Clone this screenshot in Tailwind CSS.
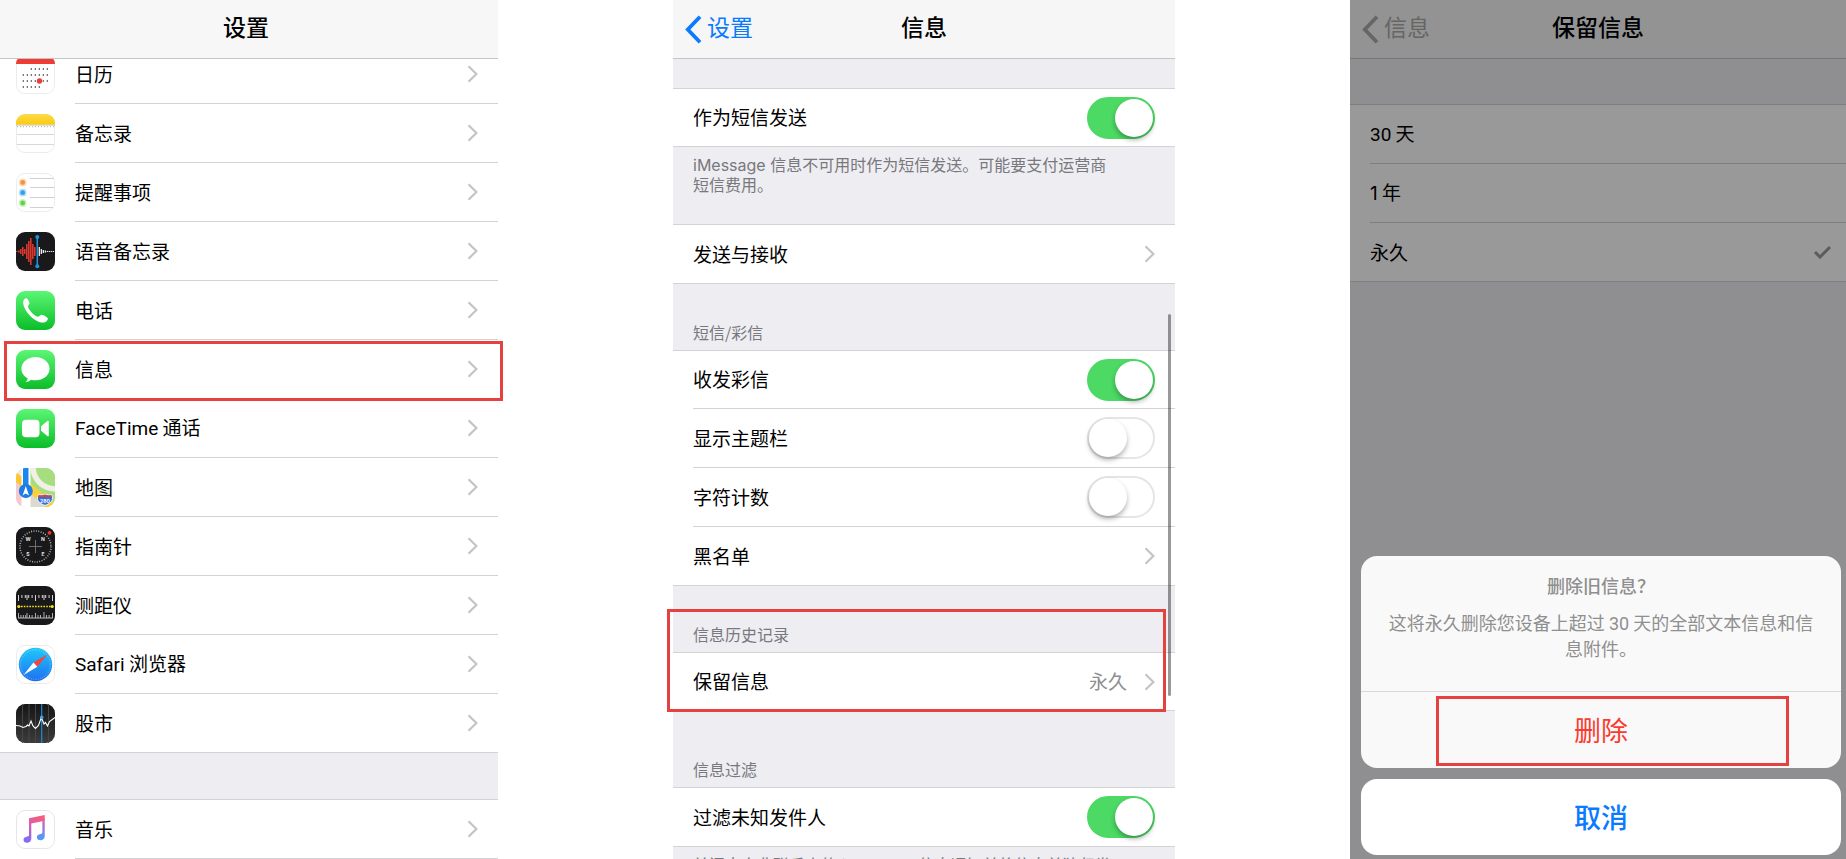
<!DOCTYPE html>
<html lang="zh-CN">
<head>
    <meta charset="UTF-8">
    <meta name="viewport" content="width=device-width, initial-scale=1.0">
    <title>设置 - 信息 - 保留信息</title>
    <script src="https://cdn.jsdelivr.net/npm/@tailwindcss/browser@4"></script>
</head>
<body class="bg-white font-['Noto_Sans_CJK_SC',sans-serif] text-[19px] text-black">

    <!-- Shared shapes -->
    <svg class="absolute size-0">
        <symbol id="chevron" viewBox="0 0 11 18"><path d="M1.5 1.2 9.4 9l-7.900 7.800" fill="none" stroke="#c4c4c8" stroke-width="2.200"/></symbol>
        <symbol id="back" viewBox="0 0 17 29"><path d="M15 1.800 2.800 14.500 15 27.200" fill="none" stroke="currentColor" stroke-width="3.800"/></symbol>
        <linearGradient id="green" x1="0" y1="0" x2="0" y2="1"><stop offset="0" stop-color="#5bf675"/><stop offset="1" stop-color="#0bbd29"/></linearGradient>
        <linearGradient id="yellow" x1="0" y1="0" x2="0" y2="1"><stop offset="0" stop-color="#fadb4b"/><stop offset="1" stop-color="#fccb0c"/></linearGradient>
        <linearGradient id="blue" x1="0" y1="0" x2="0" y2="1"><stop offset="0" stop-color="#1fc8fb"/><stop offset="1" stop-color="#1f6ff0"/></linearGradient>
        <linearGradient id="stock" x1="0" y1="0" x2="0" y2="1"><stop offset="0" stop-color="#151515"/><stop offset="1" stop-color="#3c3c3e"/></linearGradient>
        <linearGradient id="note" gradientUnits="userSpaceOnUse" x1="24" y1="5" x2="14" y2="33"><stop offset="0" stop-color="#fb5c74"/><stop offset="0.4" stop-color="#d860b0"/><stop offset="1" stop-color="#7d6bff"/></linearGradient>
        <linearGradient id="noteRight" gradientUnits="userSpaceOnUse" x1="26" y1="8" x2="26" y2="30"><stop offset="0" stop-color="#f65f86"/><stop offset="0.500" stop-color="#9a70e0"/><stop offset="1" stop-color="#3fa4ff"/></linearGradient>
    </svg>

    <main class="flex h-screen gap-[175px] overflow-hidden">

        <!-- Settings -->
        <section class="flex-[498] min-w-0">
            <header class="relative z-10 flex h-[59px] items-center justify-center border-b border-[#c4c4c6] bg-[#f7f7f7] pr-1.5 font-['Roboto','Noto_Sans_CJK_SC',sans-serif]">
                <h1 class="text-[23px] font-medium">设置</h1>
            </header>

            <nav class="-mt-[14px]">
                <a href="#calendar" class="flex h-[59px] items-center pl-4">
                    <svg class="size-[39px] shrink-0" viewBox="0 0 39 39">
                        <rect x="0.500" y="0.500" width="38" height="38" rx="8.500" fill="#fff" stroke="#ececec"/>
                        <path d="M0 9V9a9 9 0 0 1 9-9h21a9 9 0 0 1 9 9z" fill="#ee3b33"/>
                        <g stroke="#222" stroke-width="1.500" stroke-linecap="round" stroke-dasharray="0 4">
                            <path d="M15.300 14h16.100M7.300 20h24.100M7.300 26h24.100M7.300 32h16.100"/>
                        </g>
                        <circle cx="23.500" cy="26" r="2.700" fill="#ee3b33"/>
                    </svg>
                    <span class="ml-5 flex h-full flex-1 items-center justify-between border-b border-[#d3d3d6] pr-5">日历<svg class="h-[18px] w-[11px]"><use href="#chevron"/></svg></span>
                </a>
                <a href="#notes" class="flex h-[59px] items-center pl-4">
                    <svg class="size-[39px] shrink-0" viewBox="0 0 39 39">
                        <rect x="0.500" y="0.500" width="38" height="38" rx="8.500" fill="#fff" stroke="#ececec"/>
                        <path d="M0 10.500V9a9 9 0 0 1 9-9h21a9 9 0 0 1 9 9v1.500z" fill="url(#yellow)"/>
                        <path d="M0 11h39" stroke="#c5b26a" stroke-width="0.800"/>
                        <path d="M1 12.600h37" stroke="#bbb" stroke-width="1.200" stroke-dasharray="1 2"/>
                        <path d="M1 20.500h37M1 30.500h37" stroke="#d8d8d8"/>
                    </svg>
                    <span class="ml-5 flex h-full flex-1 items-center justify-between border-b border-[#d3d3d6] pr-5">备忘录<svg class="h-[18px] w-[11px]"><use href="#chevron"/></svg></span>
                </a>
                <a href="#reminders" class="flex h-[59px] items-center pl-4">
                    <svg class="size-[39px] shrink-0" viewBox="0 0 39 39">
                        <rect x="0.500" y="0.500" width="38" height="38" rx="8.500" fill="#fff" stroke="#ececec"/>
                        <path d="M14 5.500h24M14 14.500h24.500M14 24.500h24.500M14 34.500h23" stroke="#d0d0d0"/>
                        <g fill-opacity="0.350"><circle cx="6.700" cy="9.500" r="3.900" fill="#f59b3c"/><circle cx="6.700" cy="19.700" r="3.900" fill="#35a7ee"/><circle cx="6.700" cy="30" r="3.900" fill="#6bdc50"/></g>
                        <circle cx="6.700" cy="9.500" r="2.400" fill="#f1973a"/><circle cx="6.700" cy="19.700" r="2.400" fill="#2ba2ea"/><circle cx="6.700" cy="30" r="2.400" fill="#60d548"/>
                    </svg>
                    <span class="ml-5 flex h-full flex-1 items-center justify-between border-b border-[#d3d3d6] pr-5">提醒事项<svg class="h-[18px] w-[11px]"><use href="#chevron"/></svg></span>
                </a>
                <a href="#voice-memos" class="flex h-[59px] items-center pl-4">
                    <svg class="size-[39px] shrink-0" viewBox="0 0 39 39">
                        <rect width="39" height="39" rx="9" fill="#19191b"/>
                        <path d="M.8 19v1M2.800 18.500v2M4.800 17v5M6.800 15v9M8.800 17v5M10.800 12v15M12.800 9v21M14.800 6v27M16.800 12v15M18.800 15v9" stroke="#e8382f" stroke-width="1.500"/>
                        <path d="M23.300 15v9M25.300 17v5M27.300 18v3M29.300 18.500v2M31.300 19v1M33.300 19v1M35.300 19v1M37.300 19v1" stroke="#fff" stroke-width="1.200"/>
                        <path d="M21.300 5v29" stroke="#1e93dd" stroke-width="1.500"/>
                        <circle cx="21.300" cy="5" r="2" fill="#1e93dd"/><circle cx="21.300" cy="34.300" r="2" fill="#1e93dd"/>
                    </svg>
                    <span class="ml-5 flex h-full flex-1 items-center justify-between border-b border-[#d3d3d6] pr-5">语音备忘录<svg class="h-[18px] w-[11px]"><use href="#chevron"/></svg></span>
                </a>
                <a href="#phone" class="flex h-[59px] items-center pl-4">
                    <svg class="size-[39px] shrink-0" viewBox="0 0 39 39">
                        <rect width="39" height="39" rx="9" fill="url(#green)"/>
                        <path d="M7.600 9.300c.8-1.600 2.300-2.400 3.300-1.800 1.100.8 2.300 3.200 2.600 4.700.2 1.200-1.500 2-1.500 3.200 0 2.700 6 9 9.300 10.200 1.600.5 2.800-2 4.500-1.900 1.800.2 4.800 2 5.800 3.300.9 1.300-.9 3.600-2.700 4.300-3.400 1.200-9.500-1.400-14.300-6.100C9.500 20.300 5.900 13.200 7.600 9.300z" fill="#fff"/>
                    </svg>
                    <span class="ml-5 flex h-full flex-1 items-center justify-between border-b border-[#d3d3d6] pr-5">电话<svg class="h-[18px] w-[11px]"><use href="#chevron"/></svg></span>
                </a>
                <a href="#messages" class="relative flex h-[59px] items-center pl-4">
                    <svg class="size-[39px] shrink-0" viewBox="0 0 39 39">
                        <rect width="39" height="39" rx="9" fill="url(#green)"/>
                        <path d="M19.500 7C11.700 7 5.400 12.200 5.400 18.700c0 4 2.500 7.600 6.300 9.700-.2 1.500-1 2.700-2.100 3.500 2.200 0 4.200-.9 5.700-2.100 1.300.4 2.700.5 4.200.5 7.800 0 14.100-5.200 14.100-11.600C33.600 12.200 27.300 7 19.500 7z" fill="#fff"/>
                    </svg>
                    <span class="ml-5 flex h-full flex-1 items-center justify-between border-b border-[#d3d3d6] pr-5">信息<svg class="h-[18px] w-[11px]"><use href="#chevron"/></svg></span>
                    <span class="absolute top-[1px] -right-[5px] -bottom-[2px] left-1 border-3 border-[#e64141]"></span>
                </a>
                <a href="#facetime" class="flex h-[59px] items-center pl-4">
                    <svg class="size-[39px] shrink-0" viewBox="0 0 39 39">
                        <rect width="39" height="39" rx="9" fill="url(#green)"/>
                        <rect x="6" y="10.800" width="17.500" height="17.400" rx="4" fill="#fff"/>
                        <path d="M25 17.300 31.300 11.900c.7-.5 1.500-.2 1.500.7v13.800c0 .9-.8 1.200-1.500.7L25 21.700z" fill="#fff"/>
                    </svg>
                    <span class="ml-5 flex h-full flex-1 items-center justify-between border-b border-[#d3d3d6] pr-5"><span><span class="font-['Roboto']">FaceTime</span> 通话</span><svg class="h-[18px] w-[11px]"><use href="#chevron"/></svg></span>
                </a>
                <a href="#maps" class="flex h-[59px] items-center pl-4">
                    <svg class="size-[39px] shrink-0" viewBox="0 0 39 39">
                        <clipPath id="mapClip"><rect width="39" height="39" rx="9"/></clipPath>
                        <g clip-path="url(#mapClip)">
                            <rect width="39" height="39" fill="#ece9e2"/>
                            <path d="M0 8h6v31H0z" fill="#f6c9d0"/>
                            <path d="M0 4l6 5v10L0 14z" fill="#fbc62f"/>
                            <path d="M14 0h25v39H27C20 32 14 22 14 12z" fill="#a6dd7e"/>
                            <path d="M17-2c0 14 10 23 24 23" fill="none" stroke="#f1efe8" stroke-width="5.500"/>
                            <path d="M14 15 39 36v6H27L14 27z" fill="#fbcf3b"/>
                            <path d="M14 25 31 41H14z" fill="#dcd9d2"/>
                            <path d="M5.500 0h9v39h-9z" fill="#fff"/>
                            <path d="M7 0h5.500v20H7z" fill="#1b87ea"/>
                            <circle cx="9.800" cy="23" r="7" fill="#1b7de2"/>
                            <path d="M9.800 18 13 27.400l-3.200-2-3.200 2z" fill="#fff"/>
                            <path d="M22.500 26.500c2 .9 3.700.7 6.500-.3 2.800 1 4.500 1.200 6.500.3 2.500 5 .5 8.500-6.500 11-7-2.500-9-6-6.500-11z" fill="#3372d8" stroke="#fff" stroke-width="0.900"/>
                            <path d="M22.800 27c2 .8 3.500.5 6.200-.4 2.700.9 4.200 1.200 6.200.4l.7 1.900H22.100z" fill="#e33c3c"/>
                            <text x="29" y="34.500" fill="#fff" font-family="Inter, sans-serif" font-size="5" font-weight="700" text-anchor="middle">280</text>
                        </g>
                    </svg>
                    <span class="ml-5 flex h-full flex-1 items-center justify-between border-b border-[#d3d3d6] pr-5">地图<svg class="h-[18px] w-[11px]"><use href="#chevron"/></svg></span>
                </a>
                <a href="#compass" class="flex h-[59px] items-center pl-4">
                    <svg class="size-[39px] shrink-0" viewBox="0 0 39 39">
                        <rect width="39" height="39" rx="9" fill="#19191b"/>
                        <circle cx="19.500" cy="19.500" r="15.500" fill="none" stroke="#bbb" stroke-width="1.600" stroke-dasharray="0.900 1.534"/>
                        <path d="M19.500 13v13M13 19.500h13" stroke="#777" stroke-width="0.900"/>
                        <g fill="#e8e8e8" font-family="Inter, sans-serif" font-size="5" font-weight="700" text-anchor="middle"><text x="12" y="14">W</text><text x="27" y="14">N</text><text x="12" y="29">S</text><text x="27" y="29">E</text></g>
                        <circle cx="33.500" cy="5.800" r="1.900" fill="#e8382f"/>
                    </svg>
                    <span class="ml-5 flex h-full flex-1 items-center justify-between border-b border-[#d3d3d6] pr-5">指南针<svg class="h-[18px] w-[11px]"><use href="#chevron"/></svg></span>
                </a>
                <a href="#measure" class="flex h-[59px] items-center pl-4">
                    <svg class="size-[39px] shrink-0" viewBox="0 0 39 39">
                        <rect width="39" height="39" rx="9" fill="#19191b"/>
                        <path d="M2.500 9v6M5.900 9v3M9.300 9v3M12.700 9v3M16.100 9v3M19.500 9v6M22.900 9v3M26.300 9v3M29.700 9v3M33.100 9v3M36.500 9v6M11 9v5M28 9v5" stroke="#d6d6d6" stroke-width="1"/>
                        <path d="M2 32h35" stroke="#bdbdbd"/>
                        <path d="M2.500 27v5M4.900 29v3M7.300 29v3M9.700 29v3M11 27v5M13.500 29v3M16.100 29v3M19.500 27v5M22 29v3M24.500 29v3M28 26v6M30.500 29v3M33.100 29v3M36.500 27v5" stroke="#bdbdbd" stroke-width="0.900"/>
                        <path d="M5 20.500h30" stroke="#f3e01b" stroke-width="1.600" stroke-dasharray="1.600 1.200"/>
                        <circle cx="2.800" cy="20.500" r="1.600" fill="#f3e01b"/><circle cx="36.200" cy="20.500" r="1.600" fill="#f3e01b"/>
                    </svg>
                    <span class="ml-5 flex h-full flex-1 items-center justify-between border-b border-[#d3d3d6] pr-5">测距仪<svg class="h-[18px] w-[11px]"><use href="#chevron"/></svg></span>
                </a>
                <a href="#safari" class="flex h-[59px] items-center pl-4">
                    <svg class="size-[39px] shrink-0" viewBox="0 0 39 39">
                        <rect x="0.500" y="0.500" width="38" height="38" rx="8.500" fill="#fff" stroke="#ececec"/>
                        <circle cx="19.500" cy="19.500" r="16.700" fill="url(#blue)"/>
                        <circle cx="19.500" cy="19.500" r="14.800" fill="none" stroke="#fff" stroke-opacity="0.450" stroke-width="1.300" stroke-dasharray="0.500 1.437"/>
                        <path d="M31.500 9.500 21.300 21.700 17.500 17.500z" fill="#fa4237"/>
                        <path d="M7.500 30 17.500 17.500 21.300 21.700z" fill="#fff"/>
                    </svg>
                    <span class="ml-5 flex h-full flex-1 items-center justify-between border-b border-[#d3d3d6] pr-5"><span><span class="font-['Roboto']">Safari</span> 浏览器</span><svg class="h-[18px] w-[11px]"><use href="#chevron"/></svg></span>
                </a>
                <a href="#stocks" class="flex h-[59px] items-center border-b border-[#d3d3d6] pl-4">
                    <svg class="size-[39px] shrink-0" viewBox="0 0 39 39">
                        <rect width="39" height="39" rx="9" fill="url(#stock)"/>
                        <path d="M6.500 0v39M13 0v39M19.500 0v39M32.500 0v39" stroke="#4a4a4c" stroke-width="0.900"/>
                        <path d="M25.700 0v39" stroke="#1e93dd" stroke-width="1.100"/>
                        <path d="M0 21.500l4 .5 3 1.500 3-1 1.500-1.500 1.500 1 2-5 2 5 2.500 2.500 3-3 2.800-8 2.700 6.500 1.500-1.500 2 3.500 2-4.500 5.500-4" fill="none" stroke="#fff" stroke-width="1.100"/>
                        <circle cx="25.700" cy="13.300" r="1.700" fill="#3aa5ea"/>
                    </svg>
                    <span class="ml-5 flex h-full flex-1 items-center justify-between pr-5">股市<svg class="h-[18px] w-[11px]"><use href="#chevron"/></svg></span>
                </a>
                <div class="h-[47px] border-b border-[#d3d3d6] bg-[#eeedf2]"></div>
                <a href="#music" class="flex h-[59px] items-center pl-4">
                    <svg class="size-[39px] shrink-0" viewBox="0 0 39 39">
                        <rect x="0.500" y="0.500" width="38" height="38" rx="8.500" fill="#fff" stroke="#e6e6e6"/>
                        <path d="M13 8.300 28.700 5v5.700L15.300 13.500v15.300c0 2.300-1.700 4-4.200 4-2.200 0-3.600-1.200-3.600-3 0-2 1.500-3 3.700-3.400 1.300-.2 1.800-.5 1.800-1.700z" fill="url(#note)"/>
                        <path d="M26.400 8h2.300v18.300c0 2.300-1.700 4-4.200 4-2.200 0-3.600-1.200-3.600-3 0-2 1.500-3 3.700-3.400 1.300-.2 1.800-.5 1.800-1.700z" fill="url(#noteRight)"/>
                    </svg>
                    <span class="ml-5 flex h-full flex-1 items-center justify-between border-b border-[#d3d3d6] pr-5">音乐<svg class="h-[18px] w-[11px]"><use href="#chevron"/></svg></span>
                </a>
            </nav>
        </section>

        <!-- Messages -->
        <section class="relative flex-[502] min-w-0 bg-[#eeedf2]">
            <header class="grid h-[59px] grid-cols-[1fr_auto_1fr] items-center border-b border-[#c4c4c6] bg-[#f5f6f5] font-['Roboto','Noto_Sans_CJK_SC',sans-serif] text-[23px]">
                <a href="#settings" class="flex items-center gap-[5px] pl-3 text-[#0a7aff]"><svg class="h-[29px] w-[17px]"><use href="#back"/></svg>设置</a>
                <h1 class="font-medium">信息</h1>
            </header>

            <div class="h-[30px] border-b border-[#d3d3d6]"></div>
            <label class="flex h-[58px] items-center justify-between border-b border-[#d3d3d6] bg-white px-5">
                作为短信发送
                <input type="checkbox" checked class="h-[42px] w-[68px] appearance-none rounded-full border-2 border-[#e5e5e5] before:block before:size-[38px] before:rounded-full before:bg-white before:shadow-[0_3px_5px_rgba(0,0,0,0.3)] checked:border-[#4cd964] checked:bg-[#4cd964] checked:before:ml-[26px]">
            </label>
            <p class="h-[78px] border-b border-[#d3d3d6] pt-2 pr-14 pl-5 text-base/[19px] text-[#78787d]"><span class="font-['Inter']">iMessage </span>信息不可用时作为短信发送。可能要支付运营商短信费用。</p>
            <a href="#send-receive" class="flex h-[59px] items-center justify-between border-b border-[#d3d3d6] bg-white px-5">发送与接收<svg class="h-[18px] w-[11px]"><use href="#chevron"/></svg></a>

            <h2 class="flex h-[67px] items-end border-b border-[#d3d3d6] pb-2 pl-5 text-base/[20px] text-[#78787d]">短信/彩信</h2>
            <div class="bg-white pl-5">
                <label class="flex h-[58px] items-center justify-between border-b border-[#d3d3d6] pr-5">
                    收发彩信
                    <input type="checkbox" checked class="h-[42px] w-[68px] appearance-none rounded-full border-2 border-[#e5e5e5] before:block before:size-[38px] before:rounded-full before:bg-white before:shadow-[0_3px_5px_rgba(0,0,0,0.3)] checked:border-[#4cd964] checked:bg-[#4cd964] checked:before:ml-[26px]">
                </label>
                <label class="flex h-[59px] items-center justify-between border-b border-[#d3d3d6] pr-5">
                    显示主题栏
                    <input type="checkbox" class="h-[42px] w-[68px] appearance-none rounded-full border-2 border-[#e5e5e5] before:block before:size-[38px] before:rounded-full before:bg-white before:shadow-[0_3px_5px_rgba(0,0,0,0.3)] checked:border-[#4cd964] checked:bg-[#4cd964] checked:before:ml-[26px]">
                </label>
                <label class="flex h-[59px] items-center justify-between border-b border-[#d3d3d6] pr-5">
                    字符计数
                    <input type="checkbox" class="h-[42px] w-[68px] appearance-none rounded-full border-2 border-[#e5e5e5] before:block before:size-[38px] before:rounded-full before:bg-white before:shadow-[0_3px_5px_rgba(0,0,0,0.3)] checked:border-[#4cd964] checked:bg-[#4cd964] checked:before:ml-[26px]">
                </label>
            </div>
            <a href="#blocked" class="flex h-[59px] items-center justify-between border-b border-[#d3d3d6] bg-white px-5">黑名单<svg class="h-[18px] w-[11px]"><use href="#chevron"/></svg></a>

            <div class="relative">
                <h2 class="flex h-[67px] items-end border-b border-[#d3d3d6] pb-2 pl-5 text-base/[20px] text-[#78787d]">信息历史记录</h2>
                <a href="#keep-messages" class="flex h-[58px] items-center border-b border-[#d3d3d6] bg-white px-5">
                    <span class="flex-1">保留信息</span>
                    <span class="mr-[17px] text-[#8e8e93]">永久</span>
                    <svg class="h-[18px] w-[11px]"><use href="#chevron"/></svg>
                </a>
                <span class="absolute top-[23px] right-[9px] -bottom-[1px] -left-[6px] border-3 border-[#e64141]"></span>
            </div>

            <h2 class="flex h-[77px] items-end border-b border-[#d3d3d6] pb-2 pl-5 text-base/[20px] text-[#78787d]">信息过滤</h2>
            <label class="flex h-[59px] items-center justify-between border-b border-[#d3d3d6] bg-white px-5">
                过滤未知发件人
                <input type="checkbox" checked class="h-[42px] w-[68px] appearance-none rounded-full border-2 border-[#e5e5e5] before:block before:size-[38px] before:rounded-full before:bg-white before:shadow-[0_3px_5px_rgba(0,0,0,0.3)] checked:border-[#4cd964] checked:bg-[#4cd964] checked:before:ml-[26px]">
            </label>
            <p class="px-5 pt-2 text-base/[19px] text-[#78787d]">关闭来自非联系人的<span class="font-['Inter']"> iMessage </span>信息通知并将信息单独归类</p>

            <!-- Scroll indicator -->
            <div class="absolute top-[314px] right-1 h-[382px] w-[3px] rounded-full bg-black/40"></div>
        </section>

        <!-- Keep messages -->
        <section class="relative flex-[496] min-w-0 bg-[#eeedf2]">
            <header class="grid h-[59px] grid-cols-[1fr_auto_1fr] items-center border-b border-[#c4c4c6] bg-[#f5f5f5] font-['Roboto','Noto_Sans_CJK_SC',sans-serif] text-[23px]">
                <a href="#messages" class="flex items-center gap-[5px] pl-3 text-[#aaa]"><svg class="h-[29px] w-[17px]"><use href="#back"/></svg>信息</a>
                <h1 class="font-medium">保留信息</h1>
            </header>
            <div class="h-[46px] border-b border-[#d3d3d6]"></div>
            <div class="border-b border-[#d3d3d6] bg-white pl-5">
                <label class="flex h-[59px] items-center justify-between border-b border-[#d3d3d6] pr-[14px]">
                    <span><span class="font-['Roboto']">30</span> 天</span>
                    <input type="radio" name="keep" class="peer sr-only">
                    <svg class="hidden h-[14px] w-[19px] peer-checked:block" viewBox="0 0 19 14"><path d="M2 7l5 5L17 2" fill="none" stroke="#999" stroke-width="3"/></svg>
                </label>
                <label class="flex h-[59px] items-center justify-between border-b border-[#d3d3d6] pr-[14px]">
                    <span><span class="font-['Inter']">1</span> 年</span>
                    <input type="radio" name="keep" class="peer sr-only">
                    <svg class="hidden h-[14px] w-[19px] peer-checked:block" viewBox="0 0 19 14"><path d="M2 7l5 5L17 2" fill="none" stroke="#999" stroke-width="3"/></svg>
                </label>
                <label class="flex h-[58px] items-center justify-between pr-[14px]">
                    永久
                    <input type="radio" name="keep" checked class="peer sr-only">
                    <svg class="hidden h-[14px] w-[19px] peer-checked:block" viewBox="0 0 19 14"><path d="M2 7l5 5L17 2" fill="none" stroke="#999" stroke-width="3"/></svg>
                </label>
            </div>

            <!-- Action sheet -->
            <div class="absolute inset-0 flex flex-col justify-end gap-[11px] bg-black/40 pr-[5px] pb-1 pl-[11px]">
                <div class="rounded-2xl bg-[#f9f9f9]">
                    <div class="h-[136px] border-b border-[#d9d9db] px-6 pt-[17px] text-center text-lg/[24px] text-[#8f8f8f]">
                        <h2 class="font-medium">删除旧信息？</h2>
                        <p class="mt-[13px]">这将永久删除您设备上超过 <span class="font-['Roboto']">30</span> 天的全部文本信息和信息附件。</p>
                    </div>
                    <button type="button" class="relative block h-[76px] w-full text-[27px] text-[#fb3b30]">
                        删除
                        <span class="absolute top-1 right-[52px] bottom-[2px] left-[75px] border-3 border-[#e64141]"></span>
                    </button>
                </div>
                <button type="button" class="h-[76px] rounded-2xl bg-white text-[27px] font-medium text-[#0a7aff]">取消</button>
            </div>
        </section>

    </main>

</body>
</html>
